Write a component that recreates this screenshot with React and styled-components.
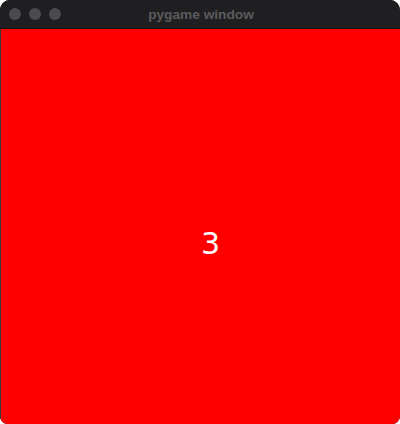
import React from 'react';
import styled, { createGlobalStyle } from 'styled-components';

const GlobalStyle = createGlobalStyle`
  html, body {
    margin: 0;
    padding: 0;
    background: #ffffff;
  }
`;

const Window = styled.div`
  width: 400px;
  height: 424px;
  display: flex;
  flex-direction: column;
  border-radius: 10px 10px 8px 8px;
  overflow: hidden;
  background: #1f1f21;
  box-shadow: inset 1px 0 0 #3a3a3c;
`;

const TitleBar = styled.div`
  position: relative;
  height: 29px;
  flex: 0 0 29px;
  display: flex;
  align-items: center;
  justify-content: center;
  background: #1f1f21;
  border-bottom: 1px solid #121213;
  box-sizing: border-box;
`;

const Lights = styled.div`
  position: absolute;
  left: 9px;
  top: 8px;
  display: flex;
  gap: 8px;
`;

const Light = styled.span`
  width: 12px;
  height: 12px;
  border-radius: 50%;
  background: #4b4b4d;
`;

const Title = styled.span`
  font-family: 'Liberation Sans', Arial, sans-serif;
  font-weight: 700;
  font-size: 13.7px;
  color: #5b5b5d;
  margin-left: 2px;
`;

const Canvas = styled.div`
  flex: 1;
  background: #ff0000;
  margin-left: 1px;
  display: flex;
  align-items: center;
  justify-content: center;
  padding: 34px 0 0 20px;
`;

const Digit = styled.span`
  font-family: 'DejaVu Sans', sans-serif;
  font-size: 30px;
  line-height: 1;
  color: #ffffff;
`;

export default function App() {
  return (
    <>
      <GlobalStyle />
      <Window>
        <TitleBar>
          <Lights>
            <Light />
            <Light />
            <Light />
          </Lights>
          <Title>pygame window</Title>
        </TitleBar>
        <Canvas>
          <Digit>3</Digit>
        </Canvas>
      </Window>
    </>
  );
}
